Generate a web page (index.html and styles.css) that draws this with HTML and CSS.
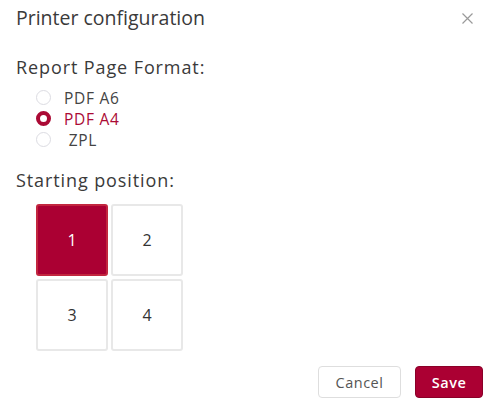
FILE: index.html
```html
<!DOCTYPE html>
<html>
<head>
<meta charset="utf-8">
<link rel="stylesheet" href="styles.css">
</head>
<body>
<div class="dialog">
  <div class="header">
    <h1 class="title">Printer configuration</h1>
    <button class="close" aria-label="Close">
      <svg width="11" height="11" viewBox="0 0 11 11"><path d="M0.5 0.5 L10.5 10.5 M10.5 0.5 L0.5 10.5" stroke="#9a9a9a" stroke-width="1.2" fill="none"/></svg>
    </button>
  </div>
  <div class="section-label">Report Page Format:</div>
  <div class="radios">
    <label class="radio"><span class="dot"></span><span class="rtext">PDF A6</span></label>
    <label class="radio checked"><span class="dot"></span><span class="rtext">PDF A4</span></label>
    <label class="radio"><span class="dot"></span><span class="rtext">&nbsp;ZPL</span></label>
  </div>
  <div class="section-label second">Starting position:</div>
  <div class="grid">
    <div class="cell selected">1</div>
    <div class="cell">2</div>
    <div class="cell">3</div>
    <div class="cell">4</div>
  </div>
  <div class="footer">
    <button class="btn cancel">Cancel</button>
    <button class="btn save">Save</button>
  </div>
</div>
</body>
</html>
```
FILE: styles.css
```css
html, body {
  margin: 0;
  padding: 0;
  background: #fff;
}
body {
  font-family: "Open Sans", sans-serif;
  color: #333;
  width: 500px;
  height: 405px;
  overflow: hidden;
}
.dialog {
  padding: 0 16px;
  display: flex;
  flex-direction: column;
}
.header {
  display: flex;
  justify-content: space-between;
  align-items: center;
  height: 34px;
}
.title {
  margin: 0;
  font-size: 19.5px;
  font-weight: 400;
  color: #3a3a3a;
}
.close {
  border: none;
  background: none;
  padding: 0;
  margin-right: 11px;
  margin-top: 3px;
  display: flex;
}
.section-label {
  margin-top: 21px;
  font-size: 18px;
  letter-spacing: 0.9px;
  color: #3a3a3a;
  line-height: 24px;
}
.section-label.second {
  margin-top: 18px;
}
.radios {
  display: flex;
  flex-direction: column;
  margin-top: 8px;
  padding-left: 20px;
}
.radio {
  display: flex;
  align-items: center;
  height: 21px;
  flex: 0 0 21px;
  font-size: 15.5px;
  letter-spacing: 0.7px;
  color: #444;
}
.dot {
  width: 15px;
  height: 15px;
  border: 1px solid #dcdce2;
  border-radius: 50%;
  box-sizing: border-box;
  margin-right: 13px;
  background: #fff;
}
.radio.checked .dot {
  border: 4.5px solid #ab0a35;
  background: #fff;
}
.radio.checked {
  color: #ab0a35;
}
.grid {
  margin-top: 12px;
  margin-left: 20px;
  display: grid;
  grid-template-columns: 72px 72px;
  grid-auto-rows: 72px;
  gap: 3px 3px;
}
.cell {
  border: 2px solid #e8e8e8;
  border-radius: 3px;
  display: flex;
  align-items: center;
  justify-content: center;
  font-size: 16px;
  color: #333;
  background: #fff;
}
.cell.selected {
  background: #ab0033;
  border-color: #c2263f;
  color: #fff;
}
.footer {
  display: flex;
  justify-content: flex-end;
  gap: 14px;
  margin-top: 15px;
  padding-right: 1px;
}
.btn {
  height: 32px;
  border-radius: 4px;
  font-family: "Open Sans", sans-serif;
  font-size: 14.5px;
  letter-spacing: 0.5px;
  padding: 0;
}
.cancel {
  width: 83px;
  background: #fff;
  border: 1px solid #dedede;
  color: #555;
}
.save {
  width: 68px;
  background: #ab0033;
  border: 1px solid #8a0028;
  color: #fff;
  font-weight: 600;
}
```
